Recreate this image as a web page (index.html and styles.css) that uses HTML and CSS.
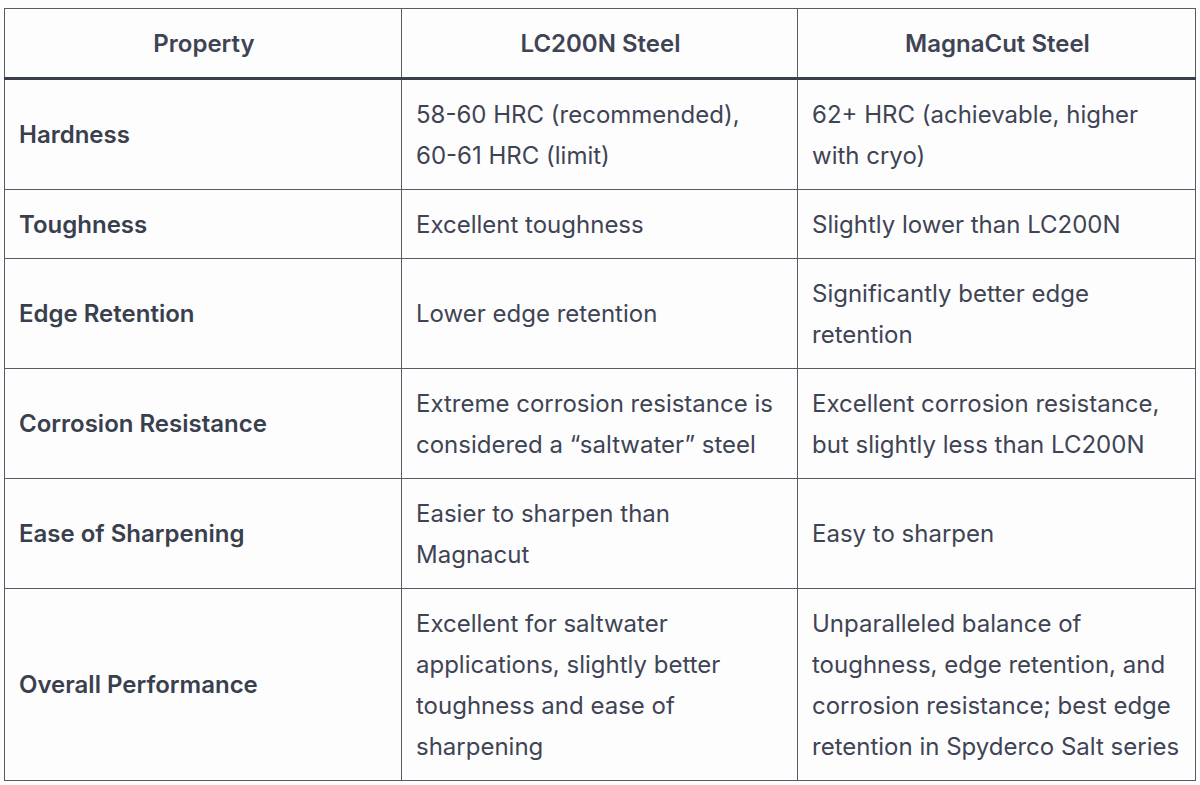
FILE: index.html
```html
<!DOCTYPE html>
<html lang="en">
<head>
<meta charset="utf-8">
<title>LC200N vs MagnaCut</title>
<link rel="stylesheet" href="styles.css">
</head>
<body>
<table class="compare">
  <colgroup>
    <col class="c1"><col class="c2"><col class="c3">
  </colgroup>
  <thead>
    <tr>
      <th>Property</th>
      <th>LC200N Steel</th>
      <th>MagnaCut Steel</th>
    </tr>
  </thead>
  <tbody>
    <tr>
      <td class="prop">Hardness</td>
      <td><span class="nb">58-60</span> HRC (recommended), <span class="nb">60-61</span> HRC (limit)</td>
      <td>62+ HRC (achievable, higher with cryo)</td>
    </tr>
    <tr>
      <td class="prop">Toughness</td>
      <td>Excellent toughness</td>
      <td>Slightly lower than LC200N</td>
    </tr>
    <tr>
      <td class="prop">Edge Retention</td>
      <td>Lower edge retention</td>
      <td>Significantly better edge retention</td>
    </tr>
    <tr>
      <td class="prop">Corrosion Resistance</td>
      <td>Extreme corrosion resistance is considered a “saltwater” steel</td>
      <td>Excellent corrosion resistance, but slightly less than LC200N</td>
    </tr>
    <tr>
      <td class="prop">Ease of Sharpening</td>
      <td>Easier to sharpen than Magnacut</td>
      <td>Easy to sharpen</td>
    </tr>
    <tr>
      <td class="prop">Overall Performance</td>
      <td>Excellent for saltwater applications, slightly better toughness and ease of sharpening</td>
      <td>Unparalleled balance of toughness, edge retention, and corrosion resistance; best edge retention in Spyderco Salt series</td>
    </tr>
  </tbody>
</table>
</body>
</html>
```

FILE: styles.css
```css
html, body {
  background: #fdfdfe;
}
body {
  margin: 8px 4px;
  font-family: Inter, "Noto Sans", "Liberation Sans", sans-serif;
  color: #3f4454;
}
.compare {
  width: 1192px;
  border-collapse: collapse;
  table-layout: fixed;
  font-size: 24px;
  line-height: 41px;
}
.c1 { width: 397px; }
.c2 { width: 396px; }
.c3 { width: 398px; }
.compare th,
.compare td {
  border: 1px solid #585c68;
  padding: 13.5px 12px 13.5px 14px;
  text-align: left;
  vertical-align: middle;
}
.compare th {
  font-weight: 600;
  text-align: center;
  padding-top: 14px;
  padding-bottom: 13px;
  border-bottom: 3px solid #3a3f4e;
}
.compare td.prop {
  font-weight: 600;
  color: #3a3f4e;
}
.nb {
  white-space: nowrap;
}
```
